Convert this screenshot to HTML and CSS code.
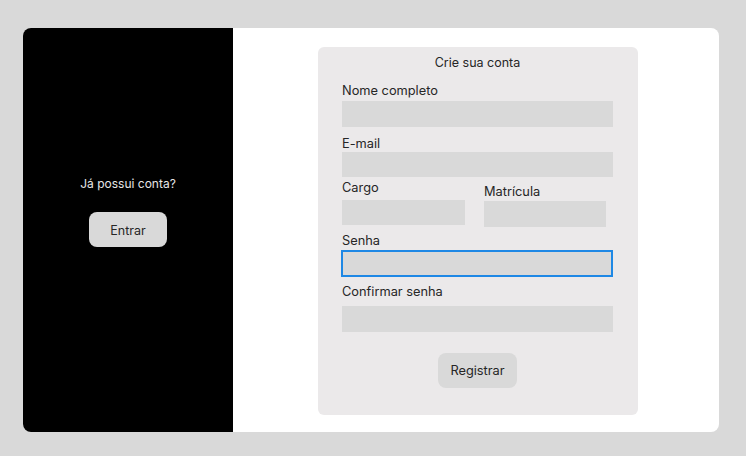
FILE: index.html
```html
<!DOCTYPE html>
<html lang="pt-BR">
<head>
<meta charset="utf-8">
<title>Crie sua conta</title>
<link rel="stylesheet" href="styles.css">
</head>
<body>
<div class="card">
  <aside class="side">
    <p class="side-text">Já possui conta?</p>
    <button class="btn btn-enter" type="button">Entrar</button>
  </aside>
  <main class="main">
    <form class="form">
      <h1 class="title">Crie sua conta</h1>
      <label class="label l-nome">Nome completo</label>
      <input class="field f-nome" type="text">
      <label class="label l-email">E-mail</label>
      <input class="field f-email" type="email">
      <div class="row">
        <div class="col col-cargo">
          <label class="label l-cargo">Cargo</label>
          <input class="field f-cargo" type="text">
        </div>
        <div class="col col-mat">
          <label class="label l-mat">Matrícula</label>
          <input class="field f-mat" type="text">
        </div>
      </div>
      <label class="label l-senha">Senha</label>
      <input class="field f-senha" type="password">
      <label class="label l-conf">Confirmar senha</label>
      <input class="field f-conf" type="password">
      <button class="btn btn-reg" type="button">Registrar</button>
    </form>
  </main>
</div>
</body>
</html>
```
FILE: styles.css
```css
* { box-sizing: border-box; }
html, body { margin: 0; padding: 0; }
body {
  background: #d9d9d9;
  width: 746px;
  height: 456px;
  padding: 28px 0 0 23px;
  font-family: Inter, "Noto Sans", sans-serif;
  color: #262626;
  overflow: hidden;
}
.card {
  width: 696px;
  height: 404px;
  background: #ffffff;
  border-radius: 8px;
  display: flex;
  overflow: hidden;
}
.side {
  width: 210px;
  background: #000000;
  display: flex;
  flex-direction: column;
  align-items: center;
  padding-top: 148px;
}
.side-text {
  margin: 0;
  font-size: 12px;
  line-height: 16px;
  color: #e6e6e6;
}
.btn {
  border: 0;
  background: #d9d9d9;
  border-radius: 8px;
  font-family: Inter, "Noto Sans", sans-serif;
  color: #262626;
  padding: 0;
  display: block;
}
.btn-enter {
  margin-top: 20px;
  width: 78px;
  height: 35px;
  font-size: 12.5px;
  padding-top: 2px;
}
.main {
  flex: 1;
  padding: 19px 0 0 85px;
}
.form {
  width: 320px;
  height: 368px;
  background: #ebe9ea;
  border-radius: 6px;
  padding: 8px 25px 0 24px;
  display: flex;
  flex-direction: column;
}
.title {
  margin: 0;
  font-size: 12.5px;
  font-weight: 400;
  line-height: 16px;
  text-align: center;
}
.label {
  display: block;
  font-size: 12.8px;
  line-height: 16px;
}
.field {
  display: block;
  width: 271px;
  border: 0;
  padding: 0;
  margin: 0;
  background: #d9d9d9;
  outline: none;
  border-radius: 0;
}
.l-nome { margin-top: 12px; }
.f-nome { margin-top: 2px; height: 26px; }
.l-email { margin-top: 9px; }
.f-email { margin-top: 0; height: 25px; }
.row {
  display: flex;
  gap: 19px;
  margin-top: 3px;
}
.col { display: flex; flex-direction: column; }
.col-cargo .field { width: 123px; }
.col-mat .field { width: 122px; }
.l-mat { margin-top: 4px; }
.f-cargo { margin-top: 4px; height: 25px; }
.f-mat { margin-top: 1px; height: 26px; }
.l-senha { margin-top: 6px; }
.f-senha {
  margin-top: 1px;
  margin-left: -1px;
  width: 272px;
  height: 27px;
  border: 2px solid #1e88e5;
}
.l-conf { margin-top: 7px; }
.f-conf { margin-top: 6px; height: 26px; }
.btn-reg {
  margin: 21px auto 0;
  width: 79px;
  height: 35px;
  font-size: 12.8px;
}
```
